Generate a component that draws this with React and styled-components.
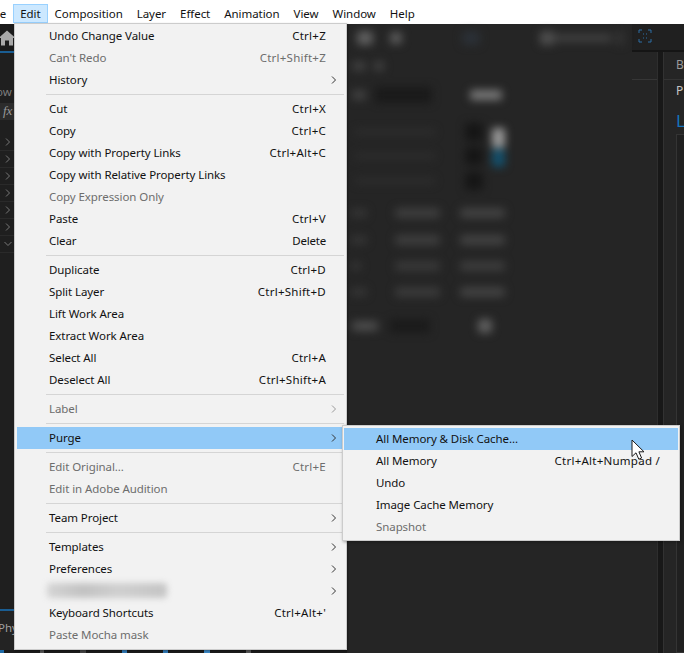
import styled, { createGlobalStyle } from 'styled-components';

const GlobalStyle = createGlobalStyle`
    html, body {
        margin: 0;
        padding: 0;
        background: #232323;
    }
`;

const menuItems = [
    { label: 'Undo Change Value', shortcut: 'Ctrl+Z' },
    { label: "Can't Redo", shortcut: 'Ctrl+Shift+Z', disabled: true },
    { label: 'History', arrow: true },
    { sep: true },
    { label: 'Cut', shortcut: 'Ctrl+X' },
    { label: 'Copy', shortcut: 'Ctrl+C' },
    { label: 'Copy with Property Links', shortcut: 'Ctrl+Alt+C' },
    { label: 'Copy with Relative Property Links' },
    { label: 'Copy Expression Only', disabled: true },
    { label: 'Paste', shortcut: 'Ctrl+V' },
    { label: 'Clear', shortcut: 'Delete' },
    { sep: true },
    { label: 'Duplicate', shortcut: 'Ctrl+D' },
    { label: 'Split Layer', shortcut: 'Ctrl+Shift+D' },
    { label: 'Lift Work Area' },
    { label: 'Extract Work Area' },
    { label: 'Select All', shortcut: 'Ctrl+A' },
    { label: 'Deselect All', shortcut: 'Ctrl+Shift+A' },
    { sep: true },
    { label: 'Label', disabled: true, arrow: true },
    { sep: true },
    { label: 'Purge', active: true, arrow: true },
    { sep: true },
    { label: 'Edit Original...', shortcut: 'Ctrl+E', disabled: true },
    { label: 'Edit in Adobe Audition', disabled: true },
    { sep: true },
    { label: 'Team Project', arrow: true },
    { sep: true },
    { label: 'Templates', arrow: true },
    { label: 'Preferences', arrow: true },
    { smudge: true, arrow: true },
    { label: 'Keyboard Shortcuts', shortcut: "Ctrl+Alt+'" },
    { label: 'Paste Mocha mask', disabled: true },
];

const purgeItems = [
    { label: 'All Memory & Disk Cache...', active: true },
    { label: 'All Memory', shortcut: 'Ctrl+Alt+Numpad /' },
    { label: 'Undo' },
    { label: 'Image Cache Memory' },
    { label: 'Snapshot', disabled: true },
];

const barItems = ['File', 'Edit', 'Composition', 'Layer', 'Effect', 'Animation', 'View', 'Window', 'Help'];

// blurred content of the panel behind the menu, row by row
const blurRows = [
    { h: 28, blobs: [[10, 16, 14, '#5e5e5e'], [17, 12, 12, '#5a5a5a'], [60, 18, 14, '#2b3036'], [60, 14, 14, '#4e4e4e'], [0, 58, 8, '#404040'], [4, 8, 14, '#343434']] },
    { h: 28, blobs: [[5, 14, 10, '#3e3e3e'], [8, 10, 10, '#404040']] },
    { h: 30, blobs: [[5, 14, 10, '#404040'], [9, 57, 16, '#1a1a1a'], [38, 32, 10, '#787878']] },
    { h: 10, blobs: [] },
    { h: 24, blobs: [[8, 80, 6, '#2e2e2e'], [30, 18, 18, '#161616'], [9, 13, 20, '#989898', 12]] },
    { h: 24, blobs: [[8, 80, 6, '#2e2e2e'], [30, 18, 18, '#161616'], [9, 13, 18, '#14506c', 4]] },
    { h: 26, blobs: [[8, 80, 6, '#2e2e2e'], [30, 18, 18, '#161616']] },
    { h: 6, blobs: [] },
    { h: 26, blobs: [[4, 16, 8, '#363636'], [28, 45, 10, '#3e3e3e'], [20, 45, 10, '#424242']] },
    { h: 27, blobs: [[4, 16, 8, '#363636'], [28, 45, 10, '#3e3e3e'], [20, 45, 10, '#424242']] },
    { h: 25, blobs: [[4, 10, 8, '#363636'], [34, 45, 10, '#383838'], [20, 45, 10, '#3c3c3c']] },
    { h: 27, blobs: [[4, 16, 8, '#363636'], [28, 45, 10, '#3a3a3a'], [20, 45, 10, '#424242']] },
    { h: 7, blobs: [] },
    { h: 28, blobs: [[5, 26, 10, '#4c4c4c'], [12, 40, 14, '#1b1b1b'], [48, 14, 14, '#5e5e5e']] },
];

const railChevrons = ['r', 'r', 'r', 'r', 'r', 'r', 'd'];
const railDots = [['#1e6aa6', 4], ['#555', 4], ['#444', 6], ['#2f78b5', 5], ['#2f78b5', 5], ['#3b87c4', 6], ['#555', 5]];

const Chevron = ({ down }) => (
    <svg width="8" height="10" viewBox="0 0 8 10" fill="none" stroke="currentColor" strokeWidth="1">
        {down ? <path d="M0.5 3L4 6.5L7.5 3" /> : <path d="M2 1.5L5.5 5L2 8.5" />}
    </svg>
);

const MenuRows = ({ items }) =>
    items.map((item, index) =>
        item.sep ? (
            <Separator key={index} />
        ) : (
            <Row key={index} $active={item.active} $disabled={item.disabled}>
                {item.smudge ? <Smudge /> : <Label>{item.label}</Label>}
                {item.shortcut && <Shortcut $combo={item.shortcut.includes('+')}>{item.shortcut}</Shortcut>}
                {item.arrow && (
                    <ArrowSlot $disabled={item.disabled}>
                        <Chevron />
                    </ArrowSlot>
                )}
            </Row>
        )
    );

const App = () => {
    return (
        <Page>
            <GlobalStyle />
            <MenuBar>
                {barItems.map((name) => (
                    <BarItem key={name} $open={name === 'Edit'}>
                        {name}
                    </BarItem>
                ))}
            </MenuBar>

            <Workspace>
                <LeftRail>
                    <HomeBar>
                        <svg width="16" height="16" viewBox="0 0 16 16" fill="#a9a9a9">
                            <path d="M7 0.5L15.5 8H13V15.5H9V10.5H5V15.5H1V8H-1.5Z" />
                        </svg>
                    </HomeBar>
                    <RailLabel>Flow</RailLabel>
                    <FxBox>fx</FxBox>
                    <RailRows>
                        {railChevrons.map((dir, index) => (
                            <RailRow key={index}>
                                <Chevron down={dir === 'd'} />
                            </RailRow>
                        ))}
                    </RailRows>
                    <RailFooter>
                        <PhyTab>Phy</PhyTab>
                        <RailDots>
                            {railDots.map(([color, w], index) => (
                                <RailDot key={index} $c={color} $w={w} />
                            ))}
                        </RailDots>
                    </RailFooter>
                </LeftRail>

                <MainArea>
                    <TopStrip>
                        <FocusCell>
                            <svg width="14" height="14" viewBox="0 0 14 14" fill="none" stroke="#2c6ea6" strokeWidth="1">
                                <path d="M1 4V1H4M10 1H13V4M13 10V13H10M4 13H1V10M5 5H6M8 5H9M5 9H6M8 9H9" />
                            </svg>
                        </FocusCell>
                    </TopStrip>
                    <Body>
                        <CenterPanel />
                        <Gutter />
                        <RightPanel>
                            <TabRow>Bo</TabRow>
                            <PropRow>P</PropRow>
                            <BlueHeading>L</BlueHeading>
                            <ListBox />
                        </RightPanel>
                    </Body>
                </MainArea>

                <BlurZone>
                    {blurRows.map((row, index) => (
                        <BlurRow key={index} $h={row.h}>
                            {row.blobs.map(([ml, w, h, color, drop], i) => (
                                <Blob key={i} $ml={ml} $w={w} $h={h} $c={color} $drop={drop || 0} />
                            ))}
                        </BlurRow>
                    ))}
                </BlurZone>
            </Workspace>

            <EditMenu>
                <MenuRows items={menuItems} />
            </EditMenu>

            <PurgeMenu>
                <MenuRows items={purgeItems} />
            </PurgeMenu>

            <Cursor width="16" height="22" viewBox="0 0 16 22">
                <path
                    d="M1 1V17.5L5 13.8L7.8 20.2L10.6 19L7.9 12.8H13Z"
                    fill="#fff"
                    stroke="#1a1a1a"
                    strokeWidth="1"
                    strokeLinejoin="miter"
                />
            </Cursor>
        </Page>
    );
};

export default App;

const Page = styled.div`
    position: relative;
    width: 684px;
    height: 653px;
    overflow: hidden;
    display: flex;
    flex-direction: column;
    font-family: 'Noto Sans', 'Open Sans', sans-serif;
    font-size: 11.5px;
    color: #111;
`;

const MenuBar = styled.div`
    height: 24px;
    flex: none;
    background: #fff;
    display: flex;
    align-items: flex-start;
    padding-top: 4px;
    box-sizing: border-box;
    margin-left: -19px;
    letter-spacing: -0.05px;
`;

const BarItem = styled.div`
    height: 19px;
    line-height: 17px;
    padding: 0 6px;
    border: 1px solid ${(p) => (p.$open ? '#99d1ff' : 'transparent')};
    box-sizing: border-box;
    background: ${(p) => (p.$open ? '#cce8ff' : 'transparent')};
`;

const Workspace = styled.div`
    position: relative;
    flex: 1;
    display: flex;
    min-height: 0;
    background: #252525;
`;

const LeftRail = styled.div`
    width: 347px;
    flex: none;
    display: flex;
    flex-direction: column;
    background: #1f1f1f;
    color: #8f8f8f;
    overflow: hidden;
`;

const HomeBar = styled.div`
    height: 27px;
    flex: none;
    background: #1b1b1b;
    border-bottom: 2px solid #1a5d92;
    display: flex;
    align-items: center;
    margin-bottom: 30px;
`;

const RailLabel = styled.div`
    height: 18px;
    line-height: 18px;
    margin-left: -13px;
    color: #7c7c7c;
`;

const FxBox = styled.div`
    margin-top: 2px;
    width: 14px;
    height: 17px;
    line-height: 16px;
    padding-left: 3px;
    box-sizing: border-box;
    background: #2c2c2c;
    color: #9a9a9a;
    font-style: italic;
    font-size: 13px;
    font-family: 'Liberation Serif', serif;
`;

const RailRows = styled.div`
    margin-top: 14px;
    display: flex;
    flex-direction: column;
`;

const RailRow = styled.div`
    height: 17px;
    box-sizing: border-box;
    border-bottom: 1px solid #2a2a2a;
    display: flex;
    align-items: center;
    padding-left: 4px;
    color: #787878;
`;

const RailFooter = styled.div`
    margin-top: auto;
    display: flex;
    flex-direction: column;
`;

const PhyTab = styled.div`
    height: 39px;
    line-height: 34px;
    border-top: 2px solid #1a5d92;
    margin-left: -2px;
    color: #a0a0a0;
    background: #232323;
`;

const RailDots = styled.div`
    height: 3px;
    display: flex;
    column-gap: 36px;
    background: #1b1b1b;
`;

const RailDot = styled.div`
    width: ${(p) => p.$w}px;
    height: 3px;
    background: ${(p) => p.$c};
`;

const MainArea = styled.div`
    flex: 1;
    min-width: 0;
    display: flex;
    flex-direction: column;
`;

const TopStrip = styled.div`
    height: 28px;
    flex: none;
    display: flex;
    justify-content: flex-end;
`;

const FocusCell = styled.div`
    width: 52px;
    box-sizing: border-box;
    background: #202020;
    border-bottom: 2px solid #151515;
    padding: 5px 0 0 6px;
    display: flex;
    align-items: flex-start;
`;

const Body = styled.div`
    flex: 1;
    display: flex;
    min-height: 0;
`;

const CenterPanel = styled.div`
    flex: 1;
    background: #252525;
    border-right: 1px solid #2e2e2e;
    position: relative;
    &::after {
        content: '';
        position: absolute;
        right: 0;
        top: 27px;
        width: 25px;
        height: 1px;
        background: #363636;
    }
`;

const Gutter = styled.div`
    width: 5px;
    flex: none;
    background: #181818;
`;

const RightPanel = styled.div`
    width: 21px;
    flex: none;
    background: #252525;
    overflow: hidden;
    border-left: 1px solid #323232;
    box-sizing: border-box;
    display: flex;
    flex-direction: column;
    padding-left: 12px;
    font-size: 12px;
`;

const TabRow = styled.div`
    height: 27px;
    flex: none;
    line-height: 26px;
    color: #9a9a9a;
    margin-left: -12px;
    padding-left: 12px;
    border-bottom: 1px solid #333;
    white-space: nowrap;
`;

const PropRow = styled.div`
    height: 22px;
    flex: none;
    line-height: 21px;
    color: #c4c4c4;
`;

const BlueHeading = styled.div`
    height: 32px;
    flex: none;
    line-height: 38px;
    font-size: 17px;
    color: #1473bd;
`;

const ListBox = styled.div`
    flex: 1;
    border: 1px solid #343434;
    border-right: none;
    background: #202020;
`;

/* lies over the panels, same blurred content as in the screenshot */
const BlurZone = styled.div`
    position: absolute;
    top: 0;
    left: 347px;
    display: flex;
    flex-direction: column;
    filter: blur(4px);
    pointer-events: none;
`;

const BlurRow = styled.div`
    height: ${(p) => p.$h}px;
    display: flex;
    align-items: center;
`;

const Blob = styled.div`
    flex: none;
    margin-left: ${(p) => p.$ml}px;
    margin-top: ${(p) => p.$drop}px;
    width: ${(p) => p.$w}px;
    height: ${(p) => p.$h}px;
    background: ${(p) => p.$c};
    border-radius: 3px;
`;

const EditMenu = styled.div`
    position: absolute;
    left: 14px;
    top: 23px;
    width: 333px;
    height: 627px;
    box-sizing: border-box;
    background: #f2f2f2;
    border: 1px solid #cccccc;
    padding: 1px 2px 3px;
    box-shadow: 1px 1px 2px rgba(0, 0, 0, 0.35);
`;

const PurgeMenu = styled.div`
    position: absolute;
    left: 342px;
    top: 425px;
    width: 338px;
    height: 116px;
    box-sizing: border-box;
    background: #f2f2f2;
    border: 1px solid #cccccc;
    padding: 2px 1px;
    box-shadow: 1px 1px 3px rgba(0, 0, 0, 0.35);
`;

const Row = styled.div`
    height: 22px;
    box-sizing: border-box;
    padding: 0 18px 1px 32px;
    display: flex;
    align-items: center;
    position: relative;
    white-space: nowrap;
    background: ${(p) => (p.$active ? '#91c9f7' : 'transparent')};
    color: ${(p) => (p.$disabled ? '#6d6d6d' : '#111')};
`;

const Label = styled.span`
    flex: 1;
    letter-spacing: -0.08px;
`;

const Shortcut = styled.span`
    flex: none;
    letter-spacing: ${(p) => (p.$combo ? '0.25px' : '-0.2px')};
`;

const ArrowSlot = styled.span`
    position: absolute;
    right: 6px;
    top: 6px;
    width: 8px;
    height: 10px;
    display: flex;
    color: ${(p) => (p.$disabled ? '#9a9a9a' : '#333')};
`;

const Smudge = styled.div`
    width: 120px;
    height: 15px;
    margin-left: -2px;
    background: linear-gradient(90deg, #d4d4d4, #c2c2c2 30%, #cfcfcf 60%, #c4c4c4);
    border-radius: 4px;
    filter: blur(3px);
`;

const Separator = styled.div`
    height: 7px;
    position: relative;
    &::after {
        content: '';
        position: absolute;
        left: 29px;
        right: 0;
        top: 3px;
        height: 1px;
        background: #d5d5d5;
    }
`;

const Cursor = styled.svg`
    position: absolute;
    left: 631px;
    top: 439px;
`;
